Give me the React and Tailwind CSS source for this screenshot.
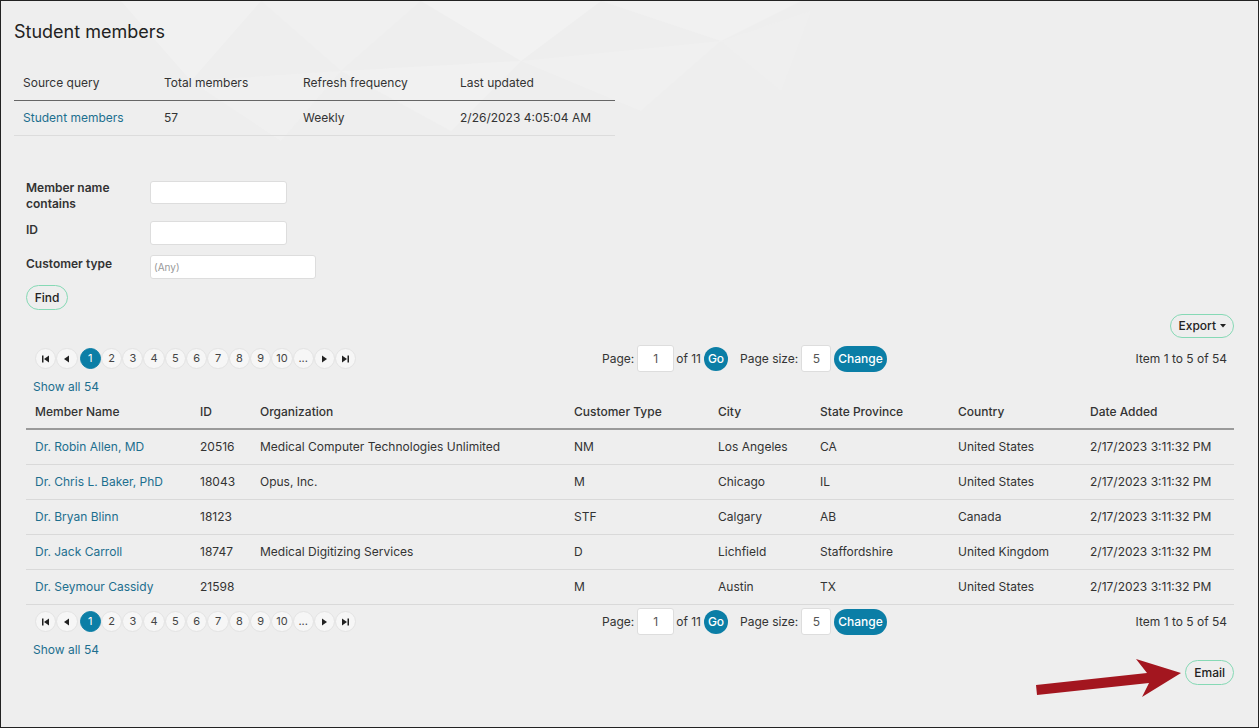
import React from 'react';

const rows = [
  ['Dr. Robin Allen, MD', '20516', 'Medical Computer Technologies Unlimited', 'NM', 'Los Angeles', 'CA', 'United States'],
  ['Dr. Chris L. Baker, PhD', '18043', 'Opus, Inc.', 'M', 'Chicago', 'IL', 'United States'],
  ['Dr. Bryan Blinn', '18123', '', 'STF', 'Calgary', 'AB', 'Canada'],
  ['Dr. Jack Carroll', '18747', 'Medical Digitizing Services', 'D', 'Lichfield', 'Staffordshire', 'United Kingdom'],
  ['Dr. Seymour Cassidy', '21598', '', 'M', 'Austin', 'TX', 'United States'],
];

const cols = ['w-[165px]', 'w-[60px]', 'w-[314px]', 'w-[144px]', 'w-[102px]', 'w-[138px]', 'w-[132px]', 'w-[153px]'];
const heads = ['Member Name', 'ID', 'Organization', 'Customer Type', 'City', 'State Province', 'Country', 'Date Added'];

function NavIcon({ kind }) {
  return (
    <svg width="9" height="8" viewBox="0 0 9 8" fill="#222">
      {kind === 'first' && (<><rect x="1" y="0.5" width="1.5" height="7" /><path d="M8 0.5 L3 4 L8 7.5 Z" /></>)}
      {kind === 'prev' && <path d="M7 0.5 L2 4 L7 7.5 Z" />}
      {kind === 'next' && <path d="M2 0.5 L7 4 L2 7.5 Z" />}
      {kind === 'last' && (<><path d="M1 0.5 L6 4 L1 7.5 Z" /><rect x="6.5" y="0.5" width="1.5" height="7" /></>)}
    </svg>
  );
}

function PageBtn({ children, active, extra = '' }) {
  return (
    <span
      className={
        'flex h-[21px] w-[21.3px] shrink-0 items-center justify-center rounded-full border text-[11px] ' +
        (active ? 'border-[#0b7ea6] bg-[#0b7ea6] text-white ' : 'border-[#e3e3e3] bg-[#f6f6f6] text-[#444] ') +
        extra
      }
    >
      {children}
    </span>
  );
}

function Pager() {
  return (
    <div>
      <div className="flex h-[27px] items-center">
        <div className="ml-[9px] flex w-[567px] items-center">
          <PageBtn><NavIcon kind="first" /></PageBtn>
          <PageBtn extra="mr-[2px]"><NavIcon kind="prev" /></PageBtn>
          <PageBtn active>1</PageBtn>
          {['2', '3', '4', '5', '6', '7', '8', '9', '10', '...'].map((n) => (
            <PageBtn key={n}>{n}</PageBtn>
          ))}
          <PageBtn><NavIcon kind="next" /></PageBtn>
          <PageBtn><NavIcon kind="last" /></PageBtn>
        </div>
        <div className="flex items-center text-[12px] text-[#333]">
          <span>Page:</span>
          <span className="ml-[3px] flex h-[27px] w-[37px] items-center justify-center rounded-[3px] border border-[#ddd] bg-white text-[12px] text-[#555]">1</span>
          <span className="ml-[2px]">of 11</span>
          <span className="ml-[3px] flex h-[24px] w-[24px] items-center justify-center rounded-full bg-[#0b7ea6] text-[12px] font-medium text-white">Go</span>
          <span className="ml-[12px]">Page size:</span>
          <span className="ml-[3px] flex h-[27px] w-[30px] items-center justify-center rounded-[3px] border border-[#ddd] bg-white text-[12px] text-[#555]">5</span>
          <span className="ml-[3px] flex h-[26px] items-center rounded-full bg-[#0b7ea6] px-[4px] text-[12px] font-medium text-white">Change</span>
        </div>
        <div className="ml-auto text-[12px] text-[#333]">Item 1 to 5 of 54</div>
      </div>
      <div className="ml-[7px] mt-[7px] h-[16px] text-[12px] leading-4 text-[#1d6f8e]">Show all 54</div>
    </div>
  );
}

export default function App() {
  return (
    <div
      className="relative h-[728px] w-[1259px] overflow-hidden border-[1.5px] border-[#222] bg-[#eeeeee] text-[#333]"
      style={{ fontFamily: 'Inter, "Noto Sans", sans-serif' }}
    >
      {/* faint background triangles */}
      <svg className="absolute left-0 top-0" width="820" height="150" viewBox="0 0 820 150">
        <path d="M120 0 L260 0 L190 80 Z" fill="#f1f1f1" />
        <path d="M260 0 L420 0 L340 70 Z" fill="#f0f0f0" />
        <path d="M420 0 L600 0 L520 60 Z" fill="#f2f2f2" />
        <path d="M600 0 L800 0 L720 40 Z" fill="#f1f1f1" />
        <path d="M190 80 L340 70 L280 140 Z" fill="#f0f0f0" />
        <path d="M340 70 L520 60 L450 130 Z" fill="#f1f1f1" />
        <path d="M520 60 L720 40 L640 110 Z" fill="#f0f0f0" />
        <path d="M720 40 L810 10 L780 90 Z" fill="#efefef" />
      </svg>

      <div className="relative">
        <h1 className="ml-[13px] pt-[19px] text-[18px] leading-6 font-normal text-[#222]">Student members</h1>

        {/* summary table */}
        <div className="ml-[13px] mt-[22px] w-[601px] text-[12px]">
          <div className="flex h-[35px] items-center border-b border-[#666]">
            <div className="w-[141px] pl-[9px]">Source query</div>
            <div className="w-[139px] pl-[9px]">Total members</div>
            <div className="w-[157px] pl-[9px]">Refresh frequency</div>
            <div className="w-[164px] pl-[9px]">Last updated</div>
          </div>
          <div className="flex h-[35px] items-center border-b border-[#dcdcdc]">
            <div className="w-[141px] pl-[9px] text-[#1d6f8e]">Student members</div>
            <div className="w-[139px] pl-[9px]">57</div>
            <div className="w-[157px] pl-[9px]">Weekly</div>
            <div className="w-[164px] pl-[9px]">2/26/2023 4:05:04 AM</div>
          </div>
        </div>

        {/* filter form */}
        <div className="ml-[25px] mt-[44px] text-[12px]">
          <div className="flex items-start">
            <div className="w-[124px] font-semibold leading-4 text-[#333]">Member name<br />contains</div>
            <div className="mt-[1px] h-[23px] w-[137px] rounded-[3px] border border-[#ddd] bg-white" />
          </div>
          <div className="mt-[9px] flex items-start">
            <div className="w-[124px] pt-[1px] font-semibold leading-4">ID</div>
            <div className="h-[24px] w-[137px] rounded-[3px] border border-[#ddd] bg-white" />
          </div>
          <div className="mt-[10px] flex items-start">
            <div className="w-[124px] pt-[1px] font-semibold leading-4">Customer type</div>
            <div className="flex h-[24px] w-[166px] items-center rounded-[3px] border border-[#ddd] bg-white pl-[3px] text-[10px] text-[#999]">(Any)</div>
          </div>
          <div className="mt-[6px] flex h-[25px] w-[42px] items-center justify-center rounded-full border-[1.5px] border-[#86d9b5] text-[12px] font-medium text-[#222]">Find</div>
        </div>

        <div className="mr-[24px] mt-[4px] flex justify-end">
          <div className="flex h-[24px] items-center gap-[4px] rounded-full border-[1.5px] border-[#86d9b5] px-[7px] text-[12px] font-medium text-[#222]">
            Export
            <svg width="6" height="4" viewBox="0 0 6 4"><path d="M0 0 L6 0 L3 3.5 Z" fill="#222" /></svg>
          </div>
        </div>

        <div className="ml-[25px] mr-[31px] mt-[7px]">
          <Pager />

          {/* main table */}
          <div className="w-[1208px] text-[12px]">
            <div className="flex h-[35px] items-center border-b-2 border-[#9a9a9a] font-medium text-[#333]">
              {heads.map((h, i) => (
                <div key={h} className={cols[i] + ' pl-[9px]'}>{h}</div>
              ))}
            </div>
            {rows.map((r) => (
              <div key={r[0]} className="flex h-[35px] items-center border-b border-[#d9d9d9]">
                {r.map((c, i) => (
                  <div key={i} className={cols[i] + ' pl-[9px] ' + (i === 0 ? 'text-[#1d6f8e]' : '')}>{c}</div>
                ))}
                <div className={cols[7] + ' pl-[9px]'}>2/17/2023 3:11:32 PM</div>
              </div>
            ))}
          </div>

          <div className="mt-[3px]">
            <Pager />
          </div>
        </div>

        <div className="mr-[24px] mt-[2px] flex justify-end">
          <div className="flex h-[25px] items-center rounded-full border-[1.5px] border-[#86d9b5] px-[8px] text-[12px] font-medium text-[#222]">Email</div>
        </div>
      </div>

      {/* red arrow */}
      <svg className="absolute left-[1030px] top-[652px]" width="155" height="48" viewBox="1030 652 155 48">
        <path d="M1035 684 L1146 672 L1135 658 L1180 672 L1141 696 L1148 682 L1036 694 Z" fill="#a3161f" />
      </svg>
    </div>
  );
}
